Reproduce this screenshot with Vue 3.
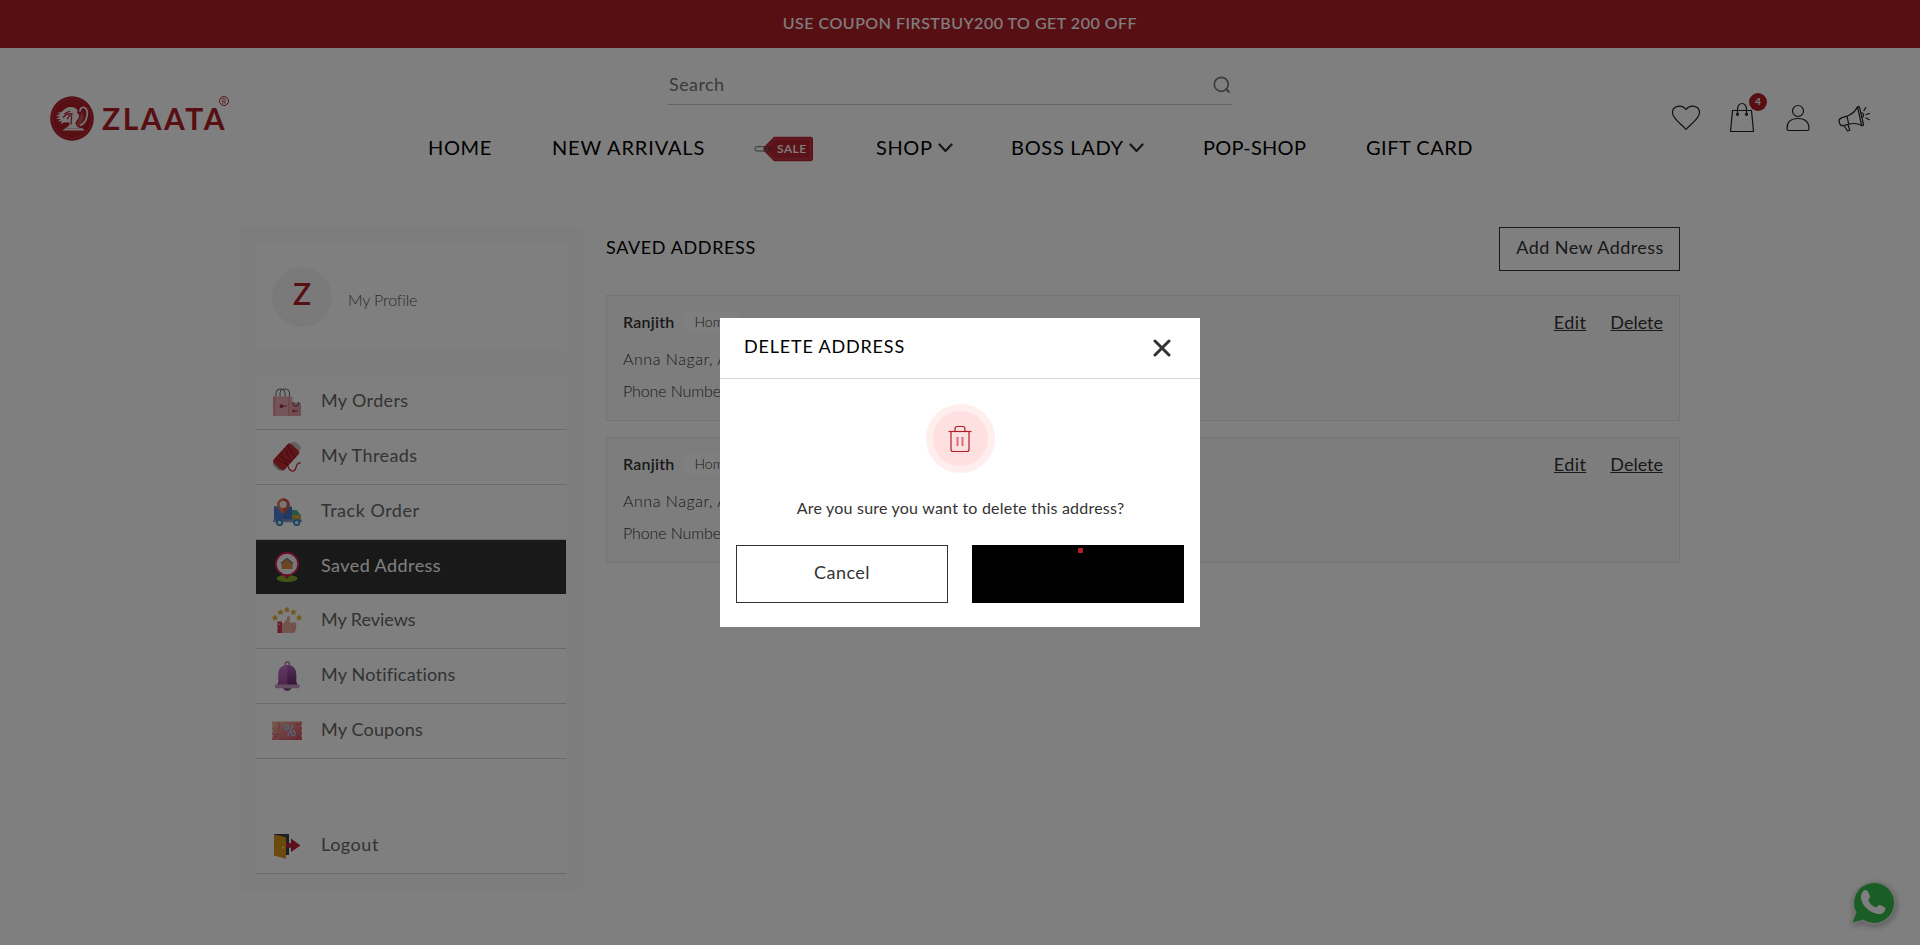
<script setup>
const nav = [
  { label: 'HOME', ls: 0.62 },
  { label: 'NEW ARRIVALS', ls: 0.84 },
  { label: 'SALE', tag: true },
  { label: 'SHOP', ls: 0.6, arrow: true },
  { label: 'BOSS LADY', ls: 0.7, arrow: true },
  { label: 'POP-SHOP', ls: 0.25 },
  { label: 'GIFT CARD', ls: 0.5 },
]
const menu = [
  { id: 'orders', label: 'My Orders', ls: 0.36 },
  { id: 'threads', label: 'My Threads', ls: 0.4 },
  { id: 'track', label: 'Track Order', ls: 0.51 },
  { id: 'address', label: 'Saved Address', ls: 0.43, active: true },
  { id: 'reviews', label: 'My Reviews', ls: -0.03 },
  { id: 'bell', label: 'My Notifications', ls: 0.22 },
  { id: 'coupons', label: 'My Coupons', ls: 0.18 },
  { id: 'logout', label: 'Logout', ls: 0.55 },
]
const addresses = [
  { id: 1, name: 'Ranjith', type: 'Home', line: 'Anna Nagar, ABC', phone: 'Phone Number' },
  { id: 2, name: 'Ranjith', type: 'Home', line: 'Anna Nagar, ABC', phone: 'Phone Number' },
]
const stars = [
  [3, 11.5],
  [8.5, 6],
  [15, 3.5],
  [21.5, 6],
  [27, 11.5],
]
</script>

<template>
  <div class="page">
    <div class="banner">USE COUPON FIRSTBUY200 TO GET 200 OFF</div>

    <header class="header">
      <div class="logo">
        <svg class="emblem" viewBox="0 0 44 45">
          <ellipse cx="22" cy="22.5" rx="21.800" ry="22.200" fill="#b11f29" />
          <ellipse cx="22" cy="22.500" rx="19.300" ry="19.700" fill="none" stroke="#cc6b73" stroke-width=".6" stroke-dasharray="1 1" />
          <g fill="#f4ecec">
            <path d="M28 15.500c-1-3.500-4.500-5-8-4.500-4 .3-6 2.500-8.500 5l-4.500 1 3.500.8-5 2.200 4.500.3-4 2.700 4.500-.3-2.500 3 4-.9-1.500 3 4.500-1.500 4.500.2c.8 2.300-1 4-3.500 5.500h14c-3-1-4.500-2.500-4.300-5 .2-2.500 3.800-4.500 3.300-7.500-.5-2.300-2-2.500-2.500-4z" />
            <path d="M26 30.500c4.500-1 8-5 7.500-10.500-.2-2.500-2-3.500-1-6z" opacity=".25" />
            <path d="M12.500 34.500l3-2.300h17l2 2.300z" />
          </g>
          <path d="M30 15c.3-2.800 2-4 3.800-3.700 3 .5 4.200 4.700 3.200 9-.8 3.700-3 7.500-6.500 9" fill="none" stroke="#f4ecec" stroke-width="1.700" stroke-linecap="round" />
          <path d="M13 21.500c3-3.500 6-4.500 9-3.500-3 1-3 3.500-5 5M21 19.500c2.500 1.500-1.500 5 .5 9M14 18l6-3" fill="none" stroke="#b11f29" stroke-width="1.200" />
        </svg>
        <span class="brand">ZLAATA</span>
        <span class="reg">R</span>
      </div>

      <div class="center">
        <div class="search">
          <span>Search</span>
          <svg width="18" height="18" viewBox="0 0 18 18" fill="none" stroke="#777" stroke-width="1.700">
            <circle cx="8.300" cy="8.300" r="7" />
            <path d="M12.500 12.500l4 4" stroke-width="2" />
          </svg>
        </div>
        <nav class="nav">
          <div v-for="n in nav" :key="n.label" class="nav-item">
            <div v-if="n.tag" class="sale">
              <svg width="60" height="26" viewBox="0 0 60 26">
                <path d="M20 .7h36.500a2.500 2.500 0 0 1 2.500 2.500v19.600a2.500 2.500 0 0 1-2.500 2.500H20L9.500 14.500v-3z" fill="#b62530" />
                <path d="M20.800 3H56.500v20H20.800L12.500 13.800v-1.600z" fill="none" stroke="#d98088" stroke-width=".6" stroke-dasharray="1.500 1" />
                <circle cx="14" cy="13" r="1.800" fill="#444" />
                <rect x=".8" y="10.700" width="13" height="4.300" rx="2.100" fill="none" stroke="#666" stroke-width="1" />
              </svg>
              <span>{{ n.label }}</span>
            </div>
            <span v-else :style="{ letterSpacing: n.ls + 'px' }">{{ n.label }}</span>
            <svg v-if="n.arrow" class="chev" width="15" height="10" viewBox="0 0 15 10">
              <path d="M1.500 1.500l6 6.500 6-6.500" fill="none" stroke="#333" stroke-width="2.300" stroke-linecap="round" stroke-linejoin="round" />
            </svg>
          </div>
        </nav>
      </div>

      <div class="tools">
        <svg viewBox="0 0 32 32">
          <path d="M16 27.500C12 22.500 2.500 17 2.500 10.500 2.500 4 11.500 1.500 16 7.500c4.500-6 13.500-3.500 13.500 3C29.500 17 20 22.500 16 27.500z" />
        </svg>
        <div class="bag">
          <svg viewBox="0 0 32 32">
            <path d="M6.500 8.500h19l2 21h-23zM11.500 12V7a4.500 5.500 0 0 1 9 0v5" />
            <circle cx="11.500" cy="12.300" r="1" /><circle cx="20.500" cy="12.300" r="1" />
          </svg>
          <span class="badge">4</span>
        </div>
        <svg viewBox="0 0 32 32">
          <circle cx="16" cy="9" r="5.500" />
          <path d="M5 26.500c0-6.500 4-10 11-10s11 3.500 11 10c0 1.500-.5 2-1.500 2h-19C5.500 28.500 5 28 5 26.500z" />
        </svg>
        <svg viewBox="0 0 32 32" stroke-width="1.400">
          <path d="M9 14.200l-5 1.400c-2.500.8-3.300 3-2.600 5.200.6 2.100 2.400 3.300 4.600 2.700l4.700-1.300zM9 14.200c4.500-1.500 8-4.500 10.500-9.300l4.200 18.600c-4.500-2.300-8.500-2.500-13-1.300M19.500 4.900c1-.9 1.700-.4 2 .4l4 17c0 1-1 1.600-1.800 1.200M6 23.500l3.500 5.500 2.300-.7-2-6M23 10.500c2.500 0 3.500 3.500 1.300 5M26 8.500l1.800-3M28 12.500l3.500-1M28 16l3.300 1.800" />
        </svg>
      </div>
    </header>

    <main class="main">
      <aside class="sidebar">
        <div class="profile">
          <div class="avatar">Z</div>
          <span>My Profile</span>
        </div>
        <ul class="menu">
          <li v-for="m in menu" :key="m.id" :class="[m.id, { active: m.active }]">
            <svg class="mi" viewBox="0 0 30 30">
              <template v-if="m.id === 'orders'">
                <path d="M4 10V6a4 4 0 0 1 4-4h1a4 4 0 0 1 4 4v4M8 10V6a4 4 0 0 1 4-4h1.500a4 4 0 0 1 4 4v6" fill="none" stroke="#555" stroke-width=".9" />
                <rect x="1" y="9.500" width="19.500" height="19.500" rx="1" fill="#e9abb4" />
                <path d="M1 9.500h2.500V29H1zM16 9.500V29h2V9.500z" fill="#dc929d" />
                <rect x="19" y="15.500" width="10" height="13.500" rx="1" fill="#e09aa5" />
                <path d="M21 15v1.500a2.500 2.500 0 0 0 5.500 0V15" fill="none" stroke="#444" stroke-width=".9" />
                <path d="M9.500 19h5.500M22 24h4" stroke="#b0303c" stroke-width="1" /><circle cx="9.500" cy="19.200" r="1.900" fill="#a4303c" /><circle cx="21.500" cy="24" r="1.200" fill="#a4303c" />
              </template>
              <template v-else-if="m.id === 'threads'">
                <path d="M16 24c2 7 7 6 8 1.500.6-3 1.500-5 5-4.500" fill="none" stroke="#c12730" stroke-width="1.200" />
                <g transform="translate(14.500 14.500) rotate(42)">
                  <rect x="-5.500" y="-17" width="11" height="6" rx="3" fill="#c4c4c4" />
                  <rect x="-5.500" y="10" width="11" height="5.500" rx="3" fill="#aaa" />
                  <rect x="-7.500" y="-12.500" width="15" height="26" rx="3" fill="#c02c32" />
                  <path d="M-7-9L7-5M-7-5L7 0M7 1L-7 5M7 5L-7 9M-7 1L7 6" stroke="#8a151b" stroke-width=".9" />
                </g>
              </template>
              <template v-else-if="m.id === 'track'">
                <rect x="2" y="9.500" width="18" height="14" fill="#4374c8" /><path d="M2 9.500h9v14H2z" fill="#4a80d4" />
                <path d="M20 13h4.500l5 6H20z" fill="#4caf83" /><path d="M20 18h9v5H20z" fill="#c8a73c" />
                <rect x="1" y="22.500" width="29" height="2.800" rx="1" fill="#8b93cc" />
                <circle cx="7.500" cy="25.500" r="2.700" fill="#d6e6f5" stroke="#2e83bd" stroke-width="1.700" />
                <circle cx="24.700" cy="25.500" r="2.700" fill="#d6e6f5" stroke="#2e83bd" stroke-width="1.700" />
                <path d="M11.300 17.500C8 13.500 5 11 5 7.500a6.300 6.300 0 0 1 12.600 0c0 3.500-3 6-6.300 10z" fill="#e8794f" />
                <path d="M11.300 1.200a6.300 6.300 0 0 1 6.300 6.300c0 3.500-3 6-6.300 10z" fill="#cc554b" />
                <circle cx="11.300" cy="7.500" r="3.500" fill="#eee" />
              </template>
              <template v-else-if="m.id === 'address'">
                <ellipse cx="15" cy="26.500" rx="10.500" ry="3.400" fill="#87aa2c" />
                <path d="M15 27l-4.500-5h9z" fill="#c01850" />
                <circle cx="15" cy="12" r="11.200" fill="#f2f2f2" stroke="#d01c58" stroke-width="1.800" />
                <path d="M15 7l5.500 4.500v5.500h-11v-5.500z" fill="#d88a4a" />
                <path d="M9 11.500l6-5 6 5" fill="none" stroke="#667080" stroke-width="1.200" />
              </template>
              <template v-else-if="m.id === 'reviews'">
                <path
                  v-for="s in stars"
                  :key="s[0]"
                  :transform="`translate(${s[0]} ${s[1]})`"
                  d="M0-3.200l1 2.100 2.300.3-1.600 1.600.4 2.300L0 2 -2.100 3.100l.4-2.300L-3.300-.8-1-1.100z"
                  fill="#e2ad3c"
                />
                <rect x="5.500" y="15.500" width="4.500" height="11.500" fill="#c93a52" />
                <path d="M10 17.500c3-1 5-4 5.300-6.500.3-1.600 2-1.600 2.500 0 .5 2 0 4-.4 5.500h5.500c2 0 2 2.500.8 3 1 .8.800 2 0 2.600.7.900.5 2-.4 2.500.2 1.400-.7 2.400-2 2.400H10z" fill="#e8aa9c" />
                <path d="M19 19.700h5M19 22.300h5M18.500 24.700h4.500" stroke="#cb8276" stroke-width=".6" />
                <circle cx="7.700" cy="18.300" r=".7" fill="#fff" />
              </template>
              <template v-else-if="m.id === 'bell'">
                <defs>
                  <linearGradient id="bellL" x1="0" x2="0" y1="0" y2="1"><stop offset="0" stop-color="#c573c6" /><stop offset="1" stop-color="#9a4a9e" /></linearGradient>
                  <linearGradient id="bellR" x1="0" x2="0" y1="0" y2="1"><stop offset="0" stop-color="#b061b3" /><stop offset="1" stop-color="#642a6b" /></linearGradient>
                </defs>
                <circle cx="15.300" cy="3" r="2.100" fill="none" stroke="#b872ba" stroke-width="1.500" />
                <path d="M11 27h8.500c-1 4-7.500 4-8.500 0z" fill="#844f8b" />
                <path d="M15.300 4C9.500 4 6.300 8 6.300 13v8L5 24h20.500l-1.300-3v-8c0-5-3-9-8.900-9z" fill="url(#bellL)" />
                <path d="M15.300 4c5.900 0 8.900 4 8.900 9v8l1.300 3H15.300z" fill="url(#bellR)" />
                <rect x="3" y="23.500" width="24.500" height="3.800" rx="1" fill="#c49ac4" />
              </template>
              <template v-else-if="m.id === 'coupons'">
                <defs>
                  <linearGradient id="cp" x1="0" x2="1" y1="0" y2="1"><stop offset="0" stop-color="#e9b79c" /><stop offset=".5" stop-color="#e08082" /><stop offset="1" stop-color="#d04a5c" /></linearGradient>
                </defs>
                <path d="M0 5.500h30v3l-1 1.500 1 1.500v2L29 15l1 1.500v2L29 20l1 1.500V24H0v-2.500L1 20l-1-1.500v-2L1 15l-1-1.500v-2L1 10 0 8.500z" fill="url(#cp)" />
                <path d="M7 6v8M2 18.500h5M2 20.500h4M23 8.500h5" stroke="#c05560" stroke-width=".7" />
                <g fill="none" stroke="#a9c6e8" stroke-width="1.500"><ellipse cx="14.800" cy="11.500" rx="1.700" ry="2.300" /><ellipse cx="21.300" cy="17.500" rx="1.700" ry="2.300" /><path d="M21 9l-5.500 11.500" /></g>
              </template>
              <template v-else>
                <path d="M2 3h15v21H8z" fill="#3a4043" />
                <path d="M2 3.500l12 2.700v21.500L2 24.500z" fill="#d8931a" />
                <circle cx="11" cy="16.500" r=".9" fill="#eee" />
                <path d="M14 12h5V7.500l9.500 7-9.500 6.500v-4.300h-5z" fill="#b52236" />
              </template>
            </svg>
            <span :style="{ letterSpacing: m.ls + 'px' }">{{ m.label }}</span>
          </li>
        </ul>
      </aside>

      <section class="content">
        <div class="head">
          <h1>SAVED ADDRESS</h1>
          <button class="add">Add New Address</button>
        </div>
        <article v-for="a in addresses" :key="a.id" class="card">
          <div class="info">
            <div class="who"><b>{{ a.name }}</b><span class="type">{{ a.type }}</span></div>
            <div class="line">{{ a.line }}</div>
            <div class="phone">{{ a.phone }}</div>
          </div>
          <div class="acts"><a class="edit">Edit</a><a>Delete</a></div>
        </article>
      </section>
    </main>

    <svg class="whatsapp" width="48" height="48" viewBox="0 0 48 48">
      <path d="M3.500 45.500l4.200-11A20.700 20.700 0 1 1 15 42.500z" fill="#35bb4b" stroke="#e4e4e4" stroke-width="1.500" stroke-linejoin="round" />
      <path d="M15 13.500c1.200-1.700 4-2 5 .2l1.700 3.800c.5 1.200.2 2-.6 2.900-.8.900-1 1.600-.5 2.600 1.500 2.800 3.700 5 6.700 6.200 1 .4 1.700 0 2.600-1.300.8-1.100 1.600-1.200 2.700-.7l3.700 1.900c1.200.7 1.300 1.800.7 3.300-1.300 3-4.800 4.100-8 3.400C21 34 14.500 28 13 20.500c-.5-2.600.3-5 2-7z" fill="#fff" />
    </svg>

    <div class="backdrop">
      <div class="modal">
        <div class="mhead">
          <h2>DELETE ADDRESS</h2>
          <svg width="18" height="18" viewBox="0 0 18 18"><path d="M2 2l14 14M16 2L2 16" stroke="#333" stroke-width="3" stroke-linecap="round" /></svg>
        </div>
        <div class="mbody">
          <div class="ring">
            <svg width="26" height="28" viewBox="0 0 26 28" fill="none" stroke="#b11f29">
              <path d="M1.500 6.500h23" stroke-width="1.200" />
              <path d="M8 6V4a2.500 2.500 0 0 1 2.500-2.500h5A2.500 2.500 0 0 1 18 4v2M4 7v17.500a2 2 0 0 0 2 2h14a2 2 0 0 0 2-2V7" stroke-width="1.200" />
              <path d="M10.500 12v9M15.500 12v9" stroke-width="1.900" opacity=".6" />
            </svg>
          </div>
          <p>Are you sure you want to delete this address?</p>
          <div class="btns">
            <button class="cancel">Cancel</button>
            <button class="confirm"><i></i></button>
          </div>
        </div>
      </div>
    </div>
  </div>
</template>

<style>
body { margin: 0; }
</style>

<style scoped>
* { box-sizing: border-box; }
h1, h2, p, ul { margin: 0; padding: 0; font-weight: 400; }
button { font-family: inherit; background: none; border-radius: 0; padding: 0; }
.page { position: relative; width: 1920px; height: 945px; overflow: hidden; background: #fff; font-family: Lato, sans-serif; color: #000; white-space: nowrap; }
.banner { height: 48px; background: #b11f29; color: #fff; text-align: center; font-size: 16px; line-height: 45px; font-weight: 500; letter-spacing: 0.5px; }
.header { display: grid; grid-template-columns: 428px 1044px 1fr; height: 179px; }
.logo { display: flex; align-items: flex-start; padding: 48px 0 0 50px; }
.emblem { width: 44px; height: 45px; }
.brand { margin-left: 8px; width: 117px; font-size: 30px; line-height: 36px; margin-top: 4px; font-weight: 700; letter-spacing: 2.5px; color: #b11f29; }
.reg { width: 10px; height: 10px; border: 1px solid #b11f29; border-radius: 50%; font-size: 7px; line-height: 8px; text-align: center; color: #b11f29; }
.center { padding-top: 16px; }
.search { display: flex; justify-content: space-between; align-items: flex-start; width: 564px; height: 41px; margin-left: 240px; padding: 0 1px 0 1px; border-bottom: 1px solid #c4c4c4; font-size: 18px; line-height: 40px; letter-spacing: 0.42px; color: #757575; }
.search svg { margin-top: 12px; }
.nav { display: grid; grid-template-columns: 124px 202px 122px 135px 192px 163px auto; height: 83px; align-items: center; font-size: 20px; line-height: 24px; }
.nav-item { display: flex; align-items: center; }
.chev { margin: 3px 0 0 5px; }
.sale { position: relative; width: 60px; height: 26px; margin-top: 5px; }
.sale span { position: absolute; left: 23px; top: 0; font-size: 12px; line-height: 26px; font-weight: 600; letter-spacing: 0.5px; color: #fff; }
.tools { display: flex; gap: 24px; padding: 54px 0 0 198px; }
.tools svg { display: block; width: 32px; height: 32px; fill: none; stroke: #222; stroke-width: 1.2; stroke-linejoin: round; stroke-linecap: round; }
.bag { position: relative; }
.badge { position: absolute; left: 23px; top: -9px; width: 18px; height: 18px; border-radius: 50%; background: #b11f29; color: #fff; font-size: 10px; line-height: 17px; font-weight: 700; text-align: center; }
.main { display: flex; gap: 24px; padding-left: 240px; }
.sidebar { width: 342px; height: 663px; padding: 16px; background: #fbfbfb; }
.profile { display: flex; align-items: center; height: 107px; padding-left: 16px; background: #fff; font-weight: 300; font-size: 16px; }
.profile span { margin: 6px 0 0 16px; letter-spacing: -0.09px; color: #555; }
.avatar { width: 60px; height: 60px; border-radius: 50%; background: #f5f5f5; color: #b11f29; font-size: 30px; line-height: 53px; font-weight: 600; text-align: center; }
.menu { margin-top: 25px; list-style: none; background: #fff; }
.menu li { display: flex; align-items: center; height: 55px; padding: 0 0 0 16px; border-bottom: 1px solid #d4d4d4; font-size: 18px; color: #666; }
.menu li span { margin: -5px 0 0 19px; line-height: 24px; }
.menu li.active { height: 54px; border: 0; background: #333; color: #fff; }
.menu li.logout { margin-top: 60px; }
.mi { width: 30px; height: 30px; }
.content { width: 1074px; }
.head { display: flex; justify-content: space-between; height: 44px; margin-bottom: 24px; }
h1 { font-size: 18px; line-height: 41px; letter-spacing: 0.62px; }
.add { width: 181px; height: 44px; border: 1px solid #333; padding: 0 0 4px 1px; font-size: 18px; letter-spacing: 0.44px; color: #333; }
.card { display: flex; justify-content: space-between; height: 126px; margin-bottom: 16px; padding: 15px 16px 0 16px; border: 1px solid #e8e8e8; background: #fbfbfb; }
.who { display: flex; align-items: center; height: 22px; }
.who b { font-size: 16px; font-weight: 600; letter-spacing: 0.24px; line-height: 20px; margin-top: -1px; color: #333; }
.type { height: 22px; margin-left: 10px; padding: 0 10px; background: #fff; font-size: 14px; line-height: 21px; font-weight: 300; color: #333; }
.line, .phone { font-size: 16px; font-weight: 300; line-height: 32px; color: #333; }
.line { margin-top: 10px; letter-spacing: 0.54px; }
.phone { letter-spacing: -0.1px; }
.acts { font-size: 18px; line-height: 23px; color: #333; }
.acts a { text-decoration: underline; text-decoration-thickness: 1px; text-underline-offset: 1px; }
.acts .edit { margin-right: 24px; letter-spacing: 0.41px; }
.whatsapp { position: absolute; left: 1848px; top: 878px; filter: drop-shadow(1px 2px 3px rgba(0, 0, 0, 0.3)); }
.backdrop { position: absolute; inset: 0; display: flex; justify-content: center; align-items: center; background: rgba(0, 0, 0, 0.5); }
.modal { width: 480px; height: 309px; background: #fff; }
.mhead { display: flex; justify-content: space-between; height: 61px; padding: 21px 29px 0 24px; border-bottom: 1px solid #d6d6d6; }
h2 { font-size: 18px; line-height: 14px; letter-spacing: 0.82px; }
.mbody { display: flex; flex-direction: column; align-items: center; padding: 25px 16px 0; }
.ring { display: flex; align-items: center; justify-content: center; width: 69px; height: 69px; border: 7px solid #ffeeee; border-radius: 50%; background: #ffe0e0; }
.mbody p { margin: 23px 0 0 1px; font-size: 16px; line-height: 24px; letter-spacing: 0.22px; color: #333; }
.btns { display: grid; grid-template-columns: 212px 212px; gap: 24px; width: 100%; height: 58px; margin-top: 25px; }
.cancel { border: 1px solid #333; padding-bottom: 5px; font-size: 18px; letter-spacing: 0.47px; color: #333; }
.confirm { display: flex; justify-content: center; align-items: flex-start; border: 0; background: #000; }
.confirm i { width: 5px; height: 5px; margin: 3px 0 0 4px; background: #b11f29; border-radius: 1px; }
</style>
